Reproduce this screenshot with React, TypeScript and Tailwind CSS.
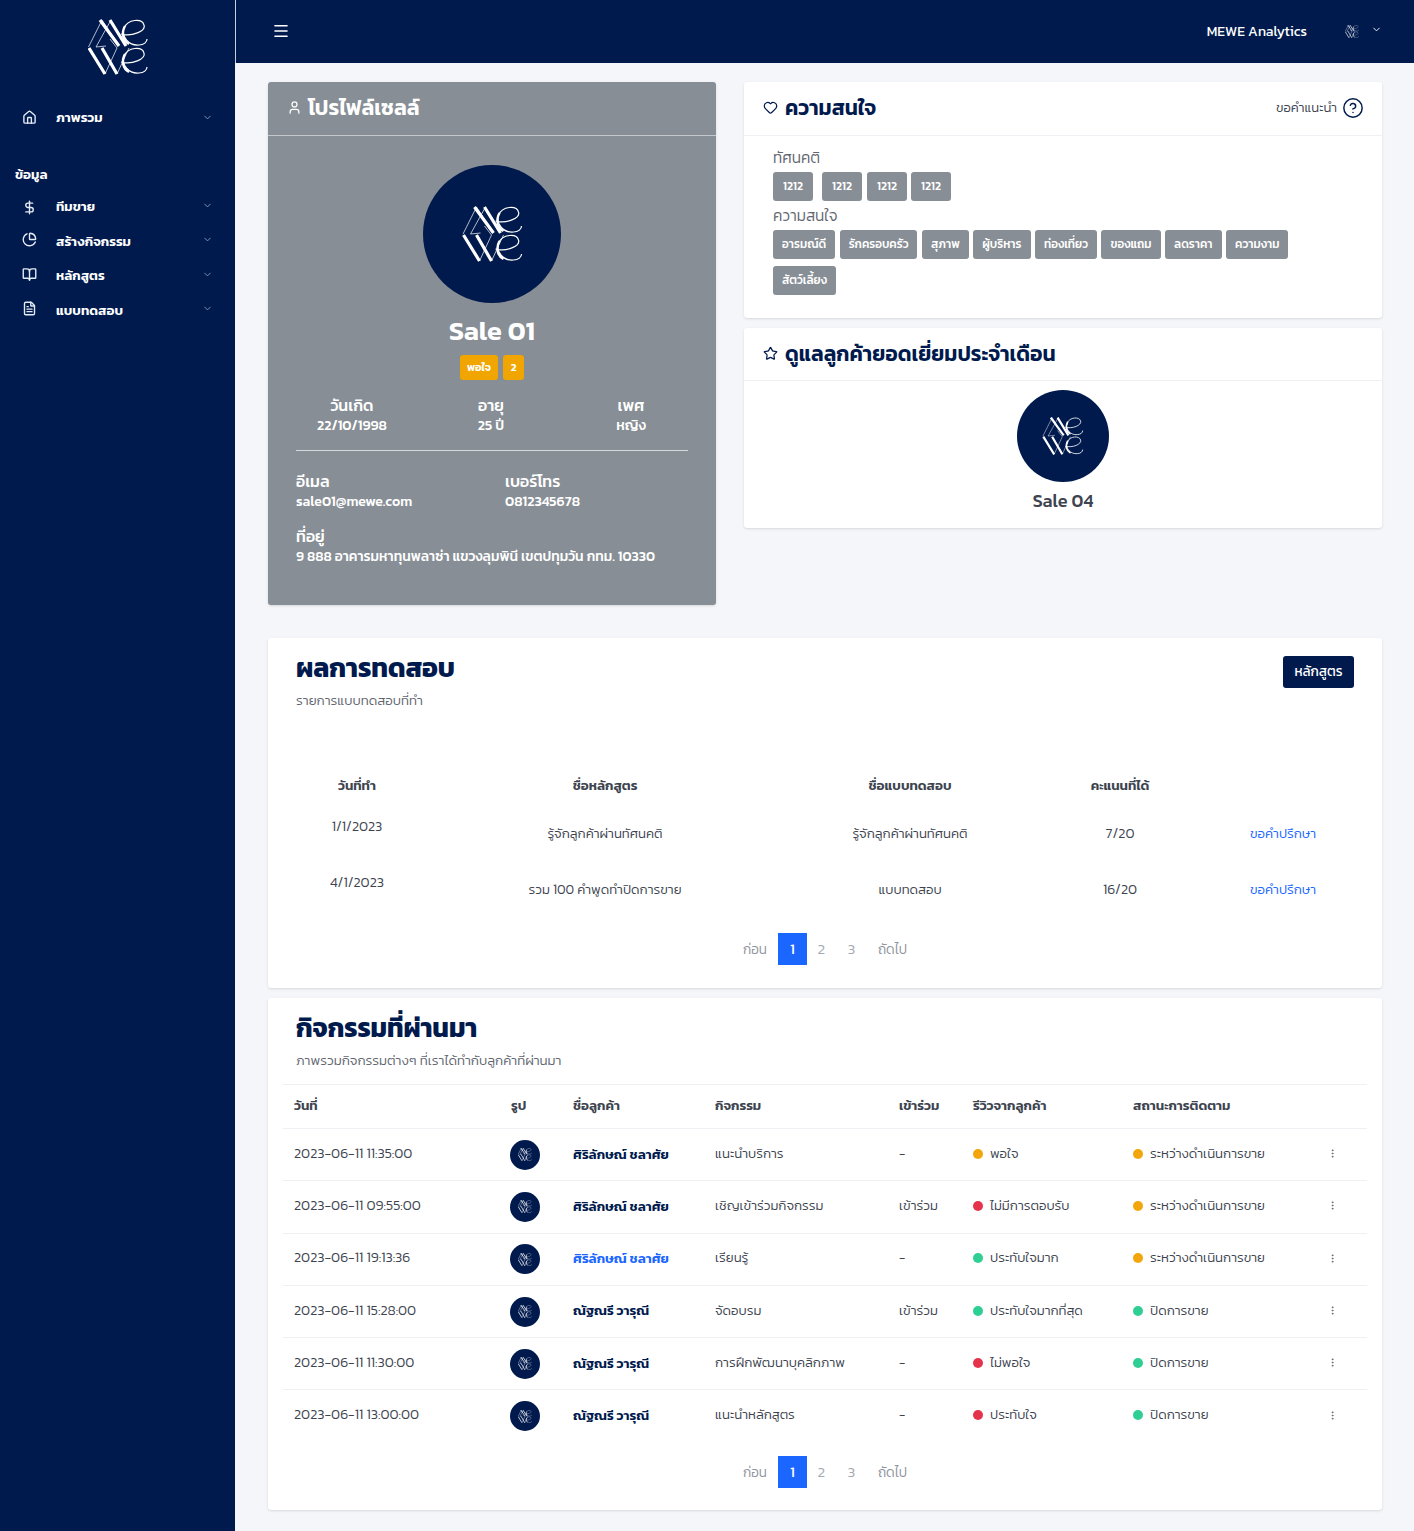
import React from "react";
import {
  BookOpen,
  ChartPie,
  ChevronDown,
  CircleHelp,
  DollarSign,
  EllipsisVertical,
  FileText,
  Heart,
  House,
  Menu,
  Star,
  User,
} from "lucide-react";

const Logo = ({ className, thin }: { className?: string; thin?: boolean }) => (
  <svg viewBox="0 0 60 56" fill="none" stroke="#fff" className={className}>
    <path d="M0.5 28L14 1L20 10M23 1L8 28L18 27" strokeWidth={thin ? 1.6 : 0.7} />
    <path d="M12 1L31 27M22 1L38 27" strokeWidth="3.2" />
    <path d="M33 15C44 18 58 12 56 6C54 -1 40 0 36 9C33 18 41 27 51 26C56 26 59 23 59 20" strokeWidth="1.2" />
    <path d="M37 7C33 14 35 22 41 25" strokeWidth="2.4" />
    <path d="M1 29L17 55M14 29L29 55" strokeWidth="3.2" />
    <path d="M17 55L29 29M29 55L41 29M29 29L22 20" strokeWidth={thin ? 1.6 : 0.7} />
    <path d="M33 43C44 46 58 40 56 34C54 27 40 28 36 37C33 46 41 55 51 54C56 54 59 51 59 48" strokeWidth="1.2" />
    <path d="M37 35C33 42 35 50 41 53" strokeWidth="2.4" />
  </svg>
);

const navItems = [
  { label: "ทีมขาย", icon: DollarSign },
  { label: "สร้างกิจกรรม", icon: ChartPie },
  { label: "หลักสูตร", icon: BookOpen },
  { label: "แบบทดสอบ", icon: FileText },
];

const interests = ["อารมณ์ดี", "รักครอบครัว", "สุภาพ", "ผู้บริหาร", "ท่องเที่ยว", "ของแถม", "ลดราคา", "ความงาม", "สัตว์เลี้ยง"];

const exams = [
  { date: "1/1/2023", course: "รู้จักลูกค้าผ่านทัศนคติ", exam: "รู้จักลูกค้าผ่านทัศนคติ", score: "7/20" },
  { date: "4/1/2023", course: "รวม 100 คำพูดทำปิดการขาย", exam: "แบบทดสอบ", score: "16/20" },
];

const ORANGE = "bg-[#f3a60b]";
const RED = "bg-[#e5334b]";
const GREEN = "bg-[#2fcf93]";

const activities = [
  { date: "2023-06-11 11:35:00", name: "ศิริลักษณ์ ชลาศัย", act: "แนะนำบริการ", join: "-", review: "พอใจ", rc: ORANGE, status: "ระหว่างดำเนินการขาย", sc: ORANGE },
  { date: "2023-06-11 09:55:00", name: "ศิริลักษณ์ ชลาศัย", act: "เชิญเข้าร่วมกิจกรรม", join: "เข้าร่วม", review: "ไม่มีการตอบรับ", rc: RED, status: "ระหว่างดำเนินการขาย", sc: ORANGE },
  { date: "2023-06-11 19:13:36", name: "ศิริลักษณ์ ชลาศัย", act: "เรียนรู้", join: "-", review: "ประทับใจมาก", rc: GREEN, status: "ระหว่างดำเนินการขาย", sc: ORANGE, link: true },
  { date: "2023-06-11 15:28:00", name: "ณัฐณรี วารุณี", act: "จัดอบรม", join: "เข้าร่วม", review: "ประทับใจมากที่สุด", rc: GREEN, status: "ปิดการขาย", sc: GREEN },
  { date: "2023-06-11 11:30:00", name: "ณัฐณรี วารุณี", act: "การฝึกพัฒนาบุคลิกภาพ", join: "-", review: "ไม่พอใจ", rc: RED, status: "ปิดการขาย", sc: GREEN },
  { date: "2023-06-11 13:00:00", name: "ณัฐณรี วารุณี", act: "แนะนำหลักสูตร", join: "-", review: "ประทับใจ", rc: RED, status: "ปิดการขาย", sc: GREEN },
];

const Pagination = () => (
  <div className="flex items-center justify-center text-[13.5px] font-light text-[#8f949d]">
    <span className="mr-[11px]">ก่อน</span>
    <span className="flex h-8 w-[29px] items-center justify-center bg-[#1a66ff] text-[15px] font-normal text-white">1</span>
    <span className="ml-[10px] w-[9px] text-center text-[15px] text-[#a5a9b1]">2</span>
    <span className="ml-[21px] w-[9px] text-center text-[15px] text-[#a5a9b1]">3</span>
    <span className="ml-[22px]">ถัดไป</span>
  </div>
);

const Tag = ({ text, className }: { text: string; className?: string }) => (
  <span className={`inline-flex h-[29px] items-center justify-center rounded-[3px] bg-[#878e95] px-[9px] text-[11.75px] font-medium text-white ${className ?? ""}`}>{text}</span>
);

export default function App() {
  return (
    <div className="flex min-h-[1531px] bg-[#f5f6fa] font-['Kanit','Noto_Sans',sans-serif] text-[#3d4450]">
      {/* sidebar */}
      <aside className="w-[235px] shrink-0 bg-[#001a4d] text-white">
        <div className="flex justify-center pt-[19px]">
          <Logo className="h-14 w-[60px]" />
        </div>
        <div className="mt-[27px] flex h-[32px] items-center pl-[22px] pr-[22px]">
          <House size={15} strokeWidth={2.2} className="mb-[2px] text-[#e6ecf5]" />
          <span className="ml-[19px] flex-1 pb-[1px] text-[13.4px] font-semibold">ภาพรวม</span>
          <ChevronDown size={11} className="mb-[2px] text-[#8c9ab5]" />
        </div>
        <div className="mt-[30px] pl-[15px] text-[13.4px] font-semibold">ข้อมูล</div>
        <div className="mt-[6px]">
          {navItems.map((item, i) => (
            <div key={item.label} className="flex h-[34.5px] items-center pl-[22px] pr-[22px]">
              <item.icon size={15} strokeWidth={2.2} className={`text-[#e6ecf5] ${i === 0 ? "" : "mb-[4px]"}`} />
              <span className="ml-[19px] flex-1 pb-[2px] text-[13.4px] font-semibold">{item.label}</span>
              <ChevronDown size={11} className="mb-[4px] text-[#8c9ab5]" />
            </div>
          ))}
        </div>
      </aside>

      <div className="min-w-0 flex-1">
        {/* navbar */}
        <header className="flex h-[63px] items-center border-l border-[#c9ced8] bg-[#001a4d] pl-[36px] pr-[32px] text-white">
          <Menu size={18} strokeWidth={2.2} className="mb-[1px]" />
          <div className="ml-auto text-sm">MEWE Analytics</div>
          <Logo className="ml-[38px] h-[13px] w-[14px] opacity-90" thin />
          <ChevronDown size={11} className="ml-[12px] mb-[4px]" />
        </header>

        <main className="pl-[33px] pr-8 pt-[19px]">
          <div className="grid grid-cols-[448px_638px] gap-[28px]">
            {/* profile */}
            <section className="h-[523px] rounded-[3px] bg-[#878e95] text-white shadow-sm">
              <div className="flex h-[54px] items-center gap-[6px] border-b border-[#c4c8cd] pb-[2px] pl-[19px]">
                <User size={15} />
                <h2 className="text-[21.3px] font-semibold">โปรไฟล์เซลล์</h2>
              </div>
              <div className="mt-[29px] flex justify-center">
                <div className="flex h-[138px] w-[138px] items-center justify-center rounded-full bg-[#001a4d]">
                  <Logo className="h-14 w-[63px]" />
                </div>
              </div>
              <div className="mt-[9px] text-center text-[27px] font-semibold leading-[38px]">Sale 01</div>
              <div className="mt-[5px] flex justify-center gap-[5px]">
                <span className="flex h-[25px] w-[38px] items-center justify-center rounded-[3px] bg-[#f0a500] text-[11px] font-semibold">พอใจ</span>
                <span className="flex h-[25px] w-[21px] items-center justify-center rounded-[3px] bg-[#f0a500] text-[11px] font-semibold">2</span>
              </div>
              <div className="mx-[28px] mt-[15px] border-b border-[#d5d8db] pb-[14px]">
                <div className="grid grid-cols-[112px_166px_114px] text-center text-sm font-medium leading-[20px]">
                  <div>
                    <div className="text-base leading-[21px]">วันเกิด</div>
                    <div>22/10/1998</div>
                  </div>
                  <div>
                    <div className="text-base leading-[21px]">อายุ</div>
                    <div>25 ปี</div>
                  </div>
                  <div>
                    <div className="text-base leading-[21px]">เพศ</div>
                    <div>หญิง</div>
                  </div>
                </div>
              </div>
              <div className="mt-[20px] grid grid-cols-[209px_1fr] pl-[28px] text-sm font-medium leading-[20px]">
                <div>
                  <div className="text-base leading-[21px]">อีเมล</div>
                  <div>sale01@mewe.com</div>
                </div>
                <div>
                  <div className="text-base leading-[21px]">เบอร์โทร</div>
                  <div>0812345678</div>
                </div>
              </div>
              <div className="mt-[14px] pl-[28px] text-[13.8px] font-medium leading-[20px]">
                <div className="text-base leading-[20px]">ที่อยู่</div>
                <div>9 888 อาคารมหาทุนพลาซ่า แขวงลุมพินี เขตปทุมวัน กทม. 10330</div>
              </div>
            </section>

            <div className="flex flex-col gap-[10px]">
              {/* interests */}
              <section className="h-[236px] rounded-[3px] bg-white shadow-sm">
                <div className="flex h-[54px] items-center border-b border-[#eef0f3] pb-[2px] pl-[19px] pr-[18px]">
                  <Heart size={15} className="text-[#001a4d]" />
                  <h2 className="ml-[7px] flex-1 text-[21px] font-semibold text-[#001a4d]">ความสนใจ</h2>
                  <span className="text-[13.1px] font-light">ขอคำแนะนำ</span>
                  <CircleHelp size={22} strokeWidth={1.6} className="ml-[5px] text-[#001a4d]" />
                </div>
                <div className="pl-[29px] pt-[11px]">
                  <div className="text-[15.4px] font-light leading-[22px] text-[#5f6670]">ทัศนคติ</div>
                  <div className="mt-[3px] flex">
                    <Tag text="1212" className="mr-[9px] w-10" />
                    <Tag text="1212" className="mr-[5px] w-10" />
                    <Tag text="1212" className="mr-[4px] w-10" />
                    <Tag text="1212" className="w-10" />
                  </div>
                  <div className="mt-[1px] text-[15.4px] font-light leading-[28px] text-[#5f6670]">ความสนใจ</div>
                  <div className="flex w-[540px] flex-wrap gap-x-[4.5px] gap-y-[7px]">
                    {interests.map((t) => (
                      <Tag key={t} text={t} />
                    ))}
                  </div>
                </div>
              </section>

              {/* top customer */}
              <section className="h-[200px] rounded-[3px] bg-white shadow-sm">
                <div className="flex h-[53px] items-center border-b border-[#eef0f3] pb-[1px] pl-[19px]">
                  <Star size={15} className="text-[#001a4d]" />
                  <h2 className="ml-[7px] text-[21px] font-semibold text-[#001a4d]">ดูแลลูกค้ายอดเยี่ยมประจำเดือน</h2>
                </div>
                <div className="mt-[9px] flex flex-col items-center">
                  <div className="flex h-[92px] w-[92px] items-center justify-center rounded-full bg-[#001a4d]">
                    <Logo className="h-[38px] w-[42px]" />
                  </div>
                  <div className="mt-[5px] text-lg font-medium">Sale 04</div>
                </div>
              </section>
            </div>
          </div>

          {/* exam results */}
          <section className="mt-[33px] h-[350px] rounded-[3px] bg-white px-[28px] pt-[10px] shadow-sm">
            <div className="flex items-start justify-between">
              <div>
                <h2 className="text-[26.5px] font-bold leading-[40px] text-[#001a4d]">ผลการทดสอบ</h2>
                <p className="mt-[2px] text-[13.4px] font-light leading-[20px] text-[#5f6670]">รายการแบบทดสอบที่ทำ</p>
              </div>
              <button className="mt-[8px] h-[32px] w-[71px] rounded-[3px] bg-[#001a4d] pb-[2px] text-[13.5px] text-white">หลักสูตร</button>
            </div>
            <table className="mt-[57px] w-full table-fixed text-center text-[13.3px] font-light">
              <thead>
                <tr className="h-[36px] text-[13.4px]">
                  <th className="w-[122px] font-semibold">วันที่ทำ</th>
                  <th className="w-[374px] font-semibold">ชื่อหลักสูตร</th>
                  <th className="w-[236px] font-semibold">ชื่อแบบทดสอบ</th>
                  <th className="w-[184px] font-semibold">คะแนนที่ได้</th>
                  <th />
                </tr>
              </thead>
              <tbody>
                {exams.map((e) => (
                  <tr key={e.date} className="h-[56px]">
                    <td className="pb-[8px] text-sm">{e.date}</td>
                    <td className="pt-[6px]">{e.course}</td>
                    <td className="pt-[6px]">{e.exam}</td>
                    <td className="pt-[6px] text-sm">{e.score}</td>
                    <td className="pt-[6px] text-[#1a66ff]">ขอคำปรึกษา</td>
                  </tr>
                ))}
              </tbody>
            </table>
            <div className="mt-[18px]">
              <Pagination />
            </div>
          </section>

          {/* activities */}
          <section className="mt-[10px] h-[512px] rounded-[3px] bg-white px-[15px] pt-[10px] shadow-sm">
            <div className="px-[13px]">
              <h2 className="text-[26.2px] font-bold leading-[40px] text-[#001a4d]">กิจกรรมที่ผ่านมา</h2>
              <p className="mt-[2px] text-[13.4px] font-light leading-[20px] text-[#5f6670]">ภาพรวมกิจกรรมต่างๆ ที่เราได้ทำกับลูกค้าที่ผ่านมา</p>
            </div>
            <table className="mt-[14px] w-full table-fixed text-left text-[13.3px] font-light">
              <thead>
                <tr className="h-[44px] border-y border-[#eef0f3] text-[13.4px]">
                  <th className="w-[228px] pb-[2px] pl-[11px] font-semibold">วันที่</th>
                  <th className="w-[62px] pb-[2px] font-semibold">รูป</th>
                  <th className="w-[142px] pb-[2px] font-semibold">ชื่อลูกค้า</th>
                  <th className="w-[184px] pb-[2px] font-semibold">กิจกรรม</th>
                  <th className="w-[74px] pb-[2px] font-semibold">เข้าร่วม</th>
                  <th className="w-[160px] pb-[2px] font-semibold">รีวิวจากลูกค้า</th>
                  <th className="w-[190px] pb-[2px] font-semibold">สถานะการติดตาม</th>
                  <th />
                </tr>
              </thead>
              <tbody>
                {activities.map((a) => (
                  <tr key={a.date} className="h-[52.3px] border-b border-[#eef0f3] last:border-b-0">
                    <td className="pb-[2px] pl-[11px] text-sm">{a.date}</td>
                    <td>
                      <div className="-ml-px flex h-[30px] w-[30px] items-center justify-center rounded-full bg-[#001a4d]">
                        <Logo className="h-[13px] w-[14px]" thin />
                      </div>
                    </td>
                    <td className={`pb-[2px] text-[13.4px] font-semibold ${a.link ? "text-[#1a66ff]" : "text-[#001a4d]"}`}>{a.name}</td>
                    <td className="pb-[2px]">{a.act}</td>
                    <td className="pb-[2px]">{a.join}</td>
                    <td className="pb-[2px]">
                      <span className="flex items-center gap-[7px]">
                        <span className={`h-[10px] w-[10px] rounded-full ${a.rc}`} />
                        {a.review}
                      </span>
                    </td>
                    <td className="pb-[2px]">
                      <span className="flex items-center gap-[7px]">
                        <span className={`h-[10px] w-[10px] rounded-full ${a.sc}`} />
                        {a.status}
                      </span>
                    </td>
                    <td className="pb-[2px]">
                      <EllipsisVertical size={11} className="ml-[4px] text-[#5f6670]" />
                    </td>
                  </tr>
                ))}
              </tbody>
            </table>
            <div className="mt-[14px]">
              <Pagination />
            </div>
          </section>
        </main>
      </div>
    </div>
  );
}
